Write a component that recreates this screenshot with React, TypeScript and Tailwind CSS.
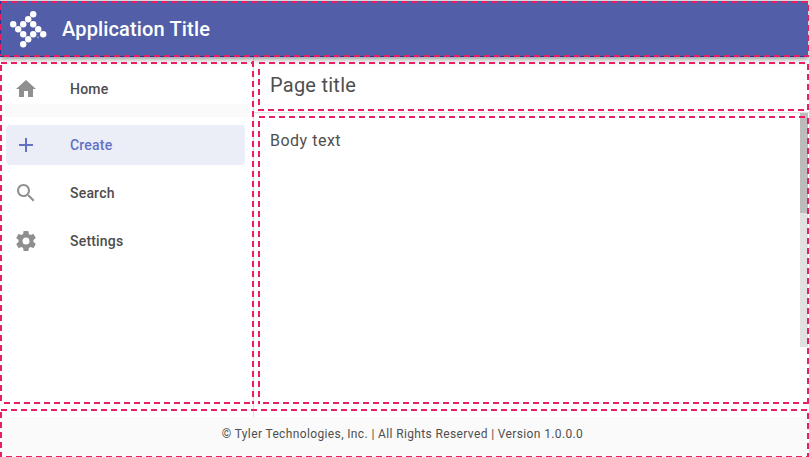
import type { ReactNode } from 'react';

const logoDots = [
  [33, 14], [28, 19], [23, 24], [33, 24], [13, 24], [18, 29], [38, 29],
  [23, 34], [33, 34], [43, 34], [28, 39], [23, 44],
];

type Outline = { id: string; d: string };

const outlines: Outline[] = [
  { id: 'header-top', d: 'M1 2H809' },
  { id: 'header-right', d: 'M808 5V56' },
  { id: 'header-bottom', d: 'M4 56H809' },
  { id: 'header-left', d: 'M1 4V56' },
  { id: 'nav-top', d: 'M1 63H254' },
  { id: 'nav-right', d: 'M253 61V404' },
  { id: 'nav-bottom', d: 'M4 403H254' },
  { id: 'nav-left', d: 'M1 65V404' },
  { id: 'title-top', d: 'M259 63H809' },
  { id: 'title-right', d: 'M808 64V111' },
  { id: 'title-bottom', d: 'M258 110H808' },
  { id: 'title-left', d: 'M259 69V111' },
  { id: 'body-top', d: 'M259 117H808' },
  { id: 'body-right', d: 'M808 118V404' },
  { id: 'body-bottom', d: 'M263 403H808' },
  { id: 'body-left', d: 'M259 121V404' },
  { id: 'footer-top', d: 'M1 410H809' },
  { id: 'footer-right', d: 'M808 413V457' },
  { id: 'footer-bottom', d: 'M6 457H809' },
  { id: 'footer-left', d: 'M1 412V457' },
];

const paths = {
  home: 'M10 20v-6h4v6h5v-8h3L12 3 2 12h3v8z',
  add: 'M19 13h-6v6h-2v-6H5v-2h6V5h2v6h6v2z',
  search:
    'M15.5 14h-.79l-.28-.27C15.41 12.59 16 11.11 16 9.5 16 5.91 13.09 3 9.5 3S3 5.91 3 9.5 5.91 16 9.5 16c1.61 0 3.09-.59 4.23-1.57l.27.28v.79l5 4.99L20.49 19l-4.99-5zm-6 0C7.01 14 5 11.99 5 9.5S7.01 5 9.5 5 14 7.01 14 9.5 11.99 14 9.5 14z',
  settings:
    'M12 15.5A3.5 3.5 0 0 1 8.5 12 3.5 3.5 0 0 1 12 8.5a3.5 3.5 0 0 1 3.5 3.5 3.5 3.5 0 0 1-3.5 3.5m7.43-2.53c.04-.32.07-.64.07-.97s-.03-.66-.07-1l2.11-1.63c.19-.15.24-.42.12-.64l-2-3.46c-.12-.22-.39-.31-.61-.22l-2.49 1c-.52-.39-1.06-.73-1.69-.98l-.37-2.65A.506.506 0 0 0 14 2h-4c-.25 0-.46.18-.5.42l-.37 2.65c-.63.25-1.17.59-1.69.98l-2.49-1c-.22-.09-.49 0-.61.22l-2 3.46c-.13.22-.07.49.12.64L4.57 11c-.04.34-.07.67-.07 1s.03.65.07.97l-2.11 1.66c-.19.15-.25.42-.12.64l2 3.46c.12.22.39.3.61.22l2.49-1.01c.52.4 1.06.74 1.69.99l.37 2.65c.04.24.25.42.5.42h4c.25 0 .46-.18.5-.42l.37-2.65c.63-.26 1.17-.59 1.69-.99l2.49 1.01c.22.08.49 0 .61-.22l2-3.46c.12-.22.07-.49-.12-.64z',
};

function NavItem({ icon, active = false, children }: { icon: keyof typeof paths; active?: boolean; children: ReactNode }) {
  return (
    <a
      className={`mx-[6px] flex h-10 w-[239px] shrink-0 items-center rounded pl-2 text-sm font-medium tracking-[0.2px] ${
        active ? 'bg-[#ebedf7] text-[#6372c5]' : 'text-[#4d4d4d]'
      }`}
    >
      <svg viewBox="0 0 24 24" className={`h-6 w-6 ${active ? 'text-[#6372c5]' : 'text-[#8f8f8f]'}`} fill="currentColor">
        <path d={paths[icon]} />
      </svg>
      <span className="ml-8">{children}</span>
    </a>
  );
}

export default function App() {
  return (
    <div className="relative flex h-[457px] w-[809px] flex-col overflow-hidden bg-white font-['Roboto','Liberation_Sans',sans-serif] text-[#4f4f4f]">
      <header className="relative z-10 flex h-[57px] shrink-0 items-center border-t border-r border-[#d8d8d8] bg-[#525fa8] shadow-[0_2px_4px_rgba(0,0,0,0.3),0_4px_8px_rgba(0,0,0,0.12)]">
        <div className="h-full w-full border-b border-l border-b-[#283593] border-l-[#283593] pl-[61px]">
          <h1 className="pt-[13px] text-xl leading-[30px] font-medium tracking-[0.15px] text-white">Application Title</h1>
        </div>
        <svg className="absolute -top-px left-0 h-[57px] w-[60px]" viewBox="0 0 60 57">
          {logoDots.map(([x, y]) => (
            <circle key={`${x}-${y}`} cx={x + 0.2} cy={y + 0.2} r="3.2" fill="#fff" />
          ))}
          <circle cx="38" cy="37.3" r="1" fill="#9299cb" />
        </svg>
      </header>

      <div className="flex h-[360px] shrink-0">
        <nav className="flex w-[254px] shrink-0 flex-col border-r border-[#e0e0e0] pt-3">
          <NavItem icon="home">Home</NavItem>
          <div className="mt-[-5px] mb-2 h-[13px] w-[250px] shrink-0 bg-[#fafafa]" />
          <NavItem icon="add" active>Create</NavItem>
          <div className="h-2 shrink-0" />
          <NavItem icon="search">Search</NavItem>
          <div className="h-2 shrink-0" />
          <NavItem icon="settings">Settings</NavItem>
        </nav>
        <main className="flex flex-1 flex-col">
          <div className="flex h-14 shrink-0 items-center border-b border-[#e0e0e0] pl-4">
            <h2 className="text-xl leading-7 font-normal tracking-[0.25px]">Page title</h2>
          </div>
          <div className="flex flex-1">
            <p className="flex-1 pt-4 pl-4 text-base leading-6 tracking-[0.5px]">Body text</p>
            <div className="mr-px h-[234px] w-2 bg-[#e1e1e1]">
              <div className="h-[100px] bg-[#bcbcbc]" />
            </div>
          </div>
        </main>
      </div>

      <footer className="flex flex-1 justify-center bg-[#fafafa] pt-[9px] pr-1 text-xs leading-4 tracking-[0.37px]">
        © Tyler Technologies, Inc. | All Rights Reserved | Version 1.0.0.0
      </footer>

      <svg className="pointer-events-none absolute inset-0 z-20 h-[457px] w-[809px]" viewBox="0 0 809 457" fill="none">
        {outlines.map((line) => (
          <path key={line.id} d={line.d} stroke="#e91e63" strokeWidth="2" strokeDasharray="6 4" />
        ))}
      </svg>
    </div>
  );
}
